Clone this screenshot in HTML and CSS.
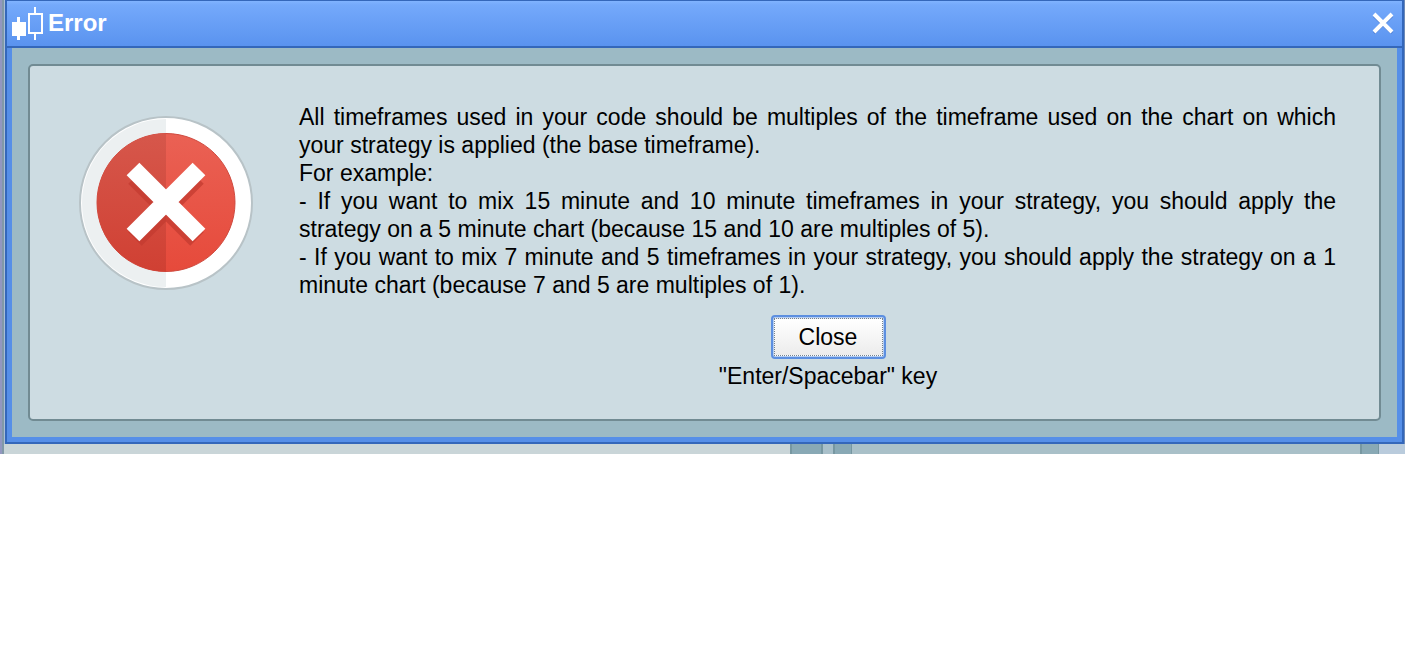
FILE: index.html
```html
<!DOCTYPE html>
<html lang="en">
<head>
<meta charset="utf-8">
<meta name="viewport" content="width=device-width, initial-scale=1">
<title>Error</title>
<link rel="stylesheet" href="styles.css">
</head>
<body>
<div class="workspace">
  <section class="dialog" role="alertdialog" aria-labelledby="dialog-title" aria-describedby="dialog-message">
    <header class="titlebar">
      <svg class="app-icon" width="32" height="34" viewBox="0 0 32 34" aria-hidden="true">
        <path fill="#fff" d="M0 16h5v-5h3v5h6v14H8v4H5v-4H0z"/>
        <path fill="#fff" fill-rule="evenodd" d="M16 7h6V1h2v6h7v21h-7v6h-2v-6h-6zM18 9v17h11V9z"/>
      </svg>
      <h1 class="title" id="dialog-title">Error</h1>
      <button class="dismiss" type="button" aria-label="Dismiss">
        <svg width="22" height="22" viewBox="0 0 22 22" aria-hidden="true">
          <path d="M2 4 20 21M20 4 2 21" stroke="#3d68b8" stroke-width="3" opacity=".6"/>
          <path d="M2 2 20 20M20 2 2 20" stroke="#fff" stroke-width="4"/>
        </svg>
      </button>
    </header>
    <div class="dialog-body">
      <div class="panel">
        <svg class="error-icon" width="176" height="176" viewBox="0 0 176 176" aria-hidden="true">
          <defs>
            <linearGradient id="red" x1="0" y1="0" x2="0" y2="1">
              <stop offset="0" stop-color="#ea6154"/>
              <stop offset="1" stop-color="#e64a3b"/>
            </linearGradient>
            <linearGradient id="shade" x1="0" y1="0" x2="0" y2="1">
              <stop offset="0" stop-color="#d6574b"/>
              <stop offset="1" stop-color="#d04033"/>
            </linearGradient>
          </defs>
          <circle cx="88" cy="89" r="86" fill="#fff" stroke="#b8c3c7" stroke-width="2"/>
          <path d="M88 5a84 84 0 0 0 0 168z" fill="#ecf0f1"/>
          <circle cx="88" cy="88.500" r="69" fill="url(#red)" stroke="#cf4a3f"/>
          <path d="M88 19.500a69 69 0 0 0 0 138z" fill="url(#shade)"/>
          <path d="M57 63 119 125M119 63 57 125" stroke="#c43b30" stroke-width="19" stroke-linejoin="round" opacity=".75"/>
          <path d="M55 55 121 121M121 55 55 121" stroke="#fff" stroke-width="18"/>
        </svg>
        <div class="content">
          <div class="message" id="dialog-message">
            <p>All timeframes used in your code should be multiples of the timeframe used on the chart on which your strategy is applied (the base timeframe).</p>
            <p>For example:</p>
            <p>- If you want to mix 15 minute and 10 minute timeframes in your strategy, you should apply the strategy on a 5 minute chart (because 15 and 10 are multiples of 5).</p>
            <p>- If you want to mix 7 minute and 5 timeframes in your strategy, you should apply the strategy on a 1 minute chart (because 7 and 5 are multiples of 1).</p>
          </div>
          <div class="actions">
            <button class="close" type="button" aria-describedby="key-hint"><span class="close-label">Close</span></button>
            <p class="hint" id="key-hint">"Enter/Spacebar" key</p>
          </div>
        </div>
      </div>
    </div>
  </section>
  <div class="backdrop" aria-hidden="true">
    <span class="pane-main"></span>
    <span class="scroller scroller-wide"></span>
    <span class="pane-gap"></span>
    <span class="scroller"></span>
    <span class="pane-side"></span>
    <span class="scroller"></span>
    <span class="pane-end"></span>
  </div>
</div>
</body>
</html>
```
FILE: styles.css
```css
* {
  box-sizing: border-box;
}

body {
  margin: 0;
  background: #fff;
  color: #000;
  font-family: "Liberation Sans", Arial, sans-serif;
  font-size: 23px;
  line-height: 28px;
}

p,
h1 {
  margin: 0;
}

.workspace {
  padding-left: 2px;
  border-left: 2px solid #9297c0;
  background: #8199a8;
}

.dialog {
  margin: 0 1px;
  padding: 0 5px 5px;
  border: 2px solid #3467ba;
  border-top-width: 1px;
  background: #568fe8;
  box-shadow: 1px 0 #6b89b8, -1px 0 #a9bfd5;
}

.titlebar {
  display: flex;
  align-items: center;
  height: 47px;
  margin: 0 -5px;
  padding: 0 5px 4px;
  background: linear-gradient(#80b3ff 0, #74a9fb 4px, #5a93ef 45px, #3467ba 45px);
}

.app-icon {
  flex: none;
}

.title {
  flex: 1;
  padding-left: 4px;
  color: #fff;
  font-size: 24px;
  line-height: 28px;
}

.dismiss {
  display: flex;
  margin-right: 3px;
  padding: 0;
  border: 0;
  background: none;
}

.dialog-body {
  padding: 16px;
  background: #9cbac5;
}

.panel {
  display: flex;
  align-items: flex-start;
  padding: 37px 22px 29px 48px;
  border: 2px solid #718b93;
  border-radius: 5px;
  background: #cddce2;
}

.error-icon {
  flex: none;
  margin: 11px 45px 0 0;
}

.content {
  flex: 1;
  min-width: 0;
}

.message {
  padding-right: 21px;
  text-align: justify;
}

.actions {
  display: flex;
  flex-direction: column;
  align-items: center;
  gap: 3px;
  margin-top: 16px;
}

.close {
  display: flex;
  width: 115px;
  height: 44px;
  padding: 1px;
  border: 2px solid #5c8fe0;
  border-radius: 4px;
  background: #b4cdf2;
  color: #000;
  font: inherit;
}

.close-label {
  display: flex;
  flex: 1;
  align-self: stretch;
  align-items: center;
  justify-content: center;
  border: 1px dotted #74838f;
  background: linear-gradient(#fff, #ececec);
}

.backdrop {
  display: flex;
  height: 10px;
}

.pane-main {
  flex: 786;
  background: #c9d5d8;
}

.pane-gap {
  width: 10px;
  background: #a9c0ca;
}

.pane-side {
  flex: 508;
  background: #a9c0c8;
}

.pane-end {
  width: 26px;
  background: #b9cbdc;
}

.scroller {
  width: 19px;
  border: solid #7797a1;
  border-width: 0 1px 0 2px;
  background: #89a9b5;
}

.scroller-wide {
  width: 33px;
  border-right-width: 2px;
}
```
